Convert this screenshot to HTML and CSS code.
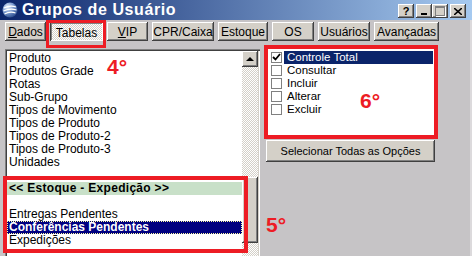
FILE: index.html
```html
<!DOCTYPE html>
<html lang="pt-BR">
<head>
    <meta charset="UTF-8">
    <title>Grupos de Usuário</title>
    <link rel="stylesheet" href="styles.css">
</head>
<body>
<div class="window">
    <div class="titlebar">
        <svg class="app-icon" width="16" height="16" viewBox="0 0 16 16">
            <defs>
                <radialGradient id="globe" cx="35%" cy="30%" r="75%">
                    <stop offset="0" stop-color="#e8f0ff"/>
                    <stop offset="0.5" stop-color="#7a9ad0"/>
                    <stop offset="1" stop-color="#2a4a8a"/>
                </radialGradient>
            </defs>
            <circle cx="8" cy="8" r="7.5" fill="url(#globe)"/>
            <path d="M2 6 Q8 3 14 5" stroke="#fff" stroke-width="1.3" fill="none"/>
            <path d="M1.5 9 Q8 6 14.5 8" stroke="#fff" stroke-width="1.3" fill="none"/>
            <path d="M2.5 12 Q8 9 13.5 11" stroke="#fff" stroke-width="1.3" fill="none"/>
        </svg>
        <span class="title">Grupos de Usuário</span>
        <div class="title-buttons">
            <span class="tbtn help">?</span>
            <span class="tbtn"><span class="glyph-min"></span></span>
            <span class="tbtn"><span class="glyph-max"></span></span>
            <span class="tbtn close">
                <svg width="8" height="7" viewBox="0 0 8 7"><path d="M0 0L8 7M8 0L0 7" stroke="#000" stroke-width="1.6"/></svg>
            </span>
        </div>
    </div>

    <div class="toolbar">
        <button class="btn b-dados"><u>D</u>ados</button>
        <button class="btn b-tabelas pressed">Tabelas</button>
        <button class="btn b-vip"><u>V</u>IP</button>
        <button class="btn b-cpr">CPR/Caixa</button>
        <button class="btn b-estoque">Estoque</button>
        <button class="btn b-os">OS</button>
        <button class="btn b-usuarios">Usuários</button>
        <button class="btn b-avancadas">Avançadas</button>
    </div>

    <div class="main">
        <div class="listbox">
            <div class="items">
                <div class="item">Produto</div>
                <div class="item">Produtos Grade</div>
                <div class="item">Rotas</div>
                <div class="item">Sub-Grupo</div>
                <div class="item">Tipos de Movimento</div>
                <div class="item">Tipos de Produto</div>
                <div class="item">Tipos de Produto-2</div>
                <div class="item">Tipos de Produto-3</div>
                <div class="item">Unidades</div>
                <div class="item"></div>
                <div class="item group">&lt;&lt; Estoque - Expedição &gt;&gt;</div>
                <div class="item"></div>
                <div class="item">Entregas Pendentes</div>
                <div class="item selected">Conferências Pendentes</div>
                <div class="item">Expedições</div>
            </div>
            <div class="scrollbar">
                <div class="arrow-up"><span class="tri"></span></div>
                <div class="track"><div class="thumb"></div></div>
            </div>
        </div>

        <div class="side">
            <div class="checklist">
                <div class="check-row active"><span class="box checked"><svg width="9" height="9" viewBox="0 0 9 9"><path d="M1 4L3.5 6.5L8 1" stroke="#000" stroke-width="1.8" fill="none"/></svg></span><span class="label">Controle Total</span></div>
                <div class="check-row"><span class="box"></span><span class="label">Consultar</span></div>
                <div class="check-row"><span class="box"></span><span class="label">Incluir</span></div>
                <div class="check-row"><span class="box"></span><span class="label">Alterar</span></div>
                <div class="check-row"><span class="box"></span><span class="label">Excluir</span></div>
            </div>
            <button class="btn wide">Selecionar Todas as Opções</button>
        </div>
    </div>

    <!-- marcações em vermelho -->
    <div class="mark mark-tabelas"></div>
    <div class="mark mark-list"></div>
    <div class="mark mark-check"></div>
    <span class="step step-4">4°</span>
    <span class="step step-5">5°</span>
    <span class="step step-6">6°</span>
</div>
</body>
</html>
```

FILE: styles.css
```css
body {
    margin: 0;
    padding: 0;
    background-color: #c6c4c6;
    font-family: "Liberation Sans", Arial, sans-serif;
    font-size: 12px;
}

.window {
    position: relative;
    width: 472px;
    height: 256px;
    overflow: hidden;
    background-color: #c6c4c6;
    box-shadow: inset -2px 0 #dcdadc;
}

/* barra de titulo */
.titlebar {
    height: 20px;
    display: flex;
    align-items: center;
    background: linear-gradient(to right, #0a246a, #a6caf0);
    padding-left: 2px;
}

.app-icon {
    margin-right: 4px;
}

.title {
    color: white;
    font-weight: bold;
    font-size: 16px;
    letter-spacing: 0.6px;
}

.title-buttons {
    margin-left: auto;
    display: flex;
    align-items: center;
    padding-right: 6px;
    padding-top: 2px;
}

.tbtn {
    width: 16px;
    height: 14px;
    display: flex;
    align-items: center;
    justify-content: center;
    background-color: #d4d0c8;
    box-shadow: inset -1px -1px #404040, inset 1px 1px #fff, inset -2px -2px #808080;
    font-weight: bold;
    font-size: 11px;
    box-sizing: border-box;
}

.tbtn.help {
    margin-right: 2px;
}

.tbtn.close {
    margin-left: 2px;
}

.glyph-min {
    width: 6px;
    height: 2px;
    background: #000;
    margin-top: 6px;
}

.glyph-max {
    width: 8px;
    height: 7px;
    border: 1px solid #808080;
    border-top-width: 2px;
    box-shadow: 1px 1px #fff;
}

/* botoes */
.toolbar {
    display: flex;
    gap: 4px;
    padding: 2px 0 0 5px;
}

.btn {
    height: 19px;
    padding: 0;
    border: none;
    background-color: #d4d0c8;
    box-shadow: inset -1px -1px #404040, inset 1px 1px #fff, inset -2px -2px #808080;
    font-family: "Liberation Sans", Arial, sans-serif;
    font-size: 12px;
    color: #000;
}

.btn.pressed {
    background: repeating-conic-gradient(#fff 0 25%, #d4d0c8 0 50%) 0 0 / 2px 2px;
    box-shadow: inset 1px 1px #404040, inset -1px -1px #fff, inset 2px 2px #808080;
    padding-top: 2px;
}

.b-dados { width: 41px; }
.b-tabelas { width: 53px; }
.b-vip { width: 41px; }
.b-cpr { width: 62px; }
.b-estoque { width: 50px; }
.b-os { width: 42px; }
.b-usuarios { width: 52px; }
.b-avancadas { width: 65px; }

/* area principal */
.main {
    display: flex;
    align-items: flex-start;
    margin-top: 6px;
    padding-left: 5px;
}

.listbox {
    margin-top: 2px;
    width: 255px;
    height: 215px;
    box-sizing: border-box;
    display: flex;
    background: white;
    box-shadow: inset 1px 1px #808080, inset 2px 2px #404040, inset -1px -1px #fff, inset -2px -2px #d4d0c8;
    padding: 2px;
}

.items {
    flex: 1;
    padding-top: 1px;
}

.item {
    height: 13px;
    line-height: 13px;
    padding-left: 2px;
    white-space: nowrap;
}

.item.group {
    background-color: #c8e0c8;
    font-weight: bold;
    letter-spacing: 0.3px;
}

.item.selected {
    background-color: #000080;
    color: white;
    font-weight: bold;
    outline: 1px dotted #ffffa0;
    outline-offset: -1px;
}

.scrollbar {
    width: 16px;
    display: flex;
    flex-direction: column;
}

.arrow-up {
    height: 16px;
    background-color: #d4d0c8;
    box-shadow: inset -1px -1px #404040, inset 1px 1px #fff, inset -2px -2px #808080;
    display: flex;
    align-items: center;
    justify-content: center;
}

.tri {
    width: 0;
    height: 0;
    border-left: 4px solid transparent;
    border-right: 4px solid transparent;
    border-bottom: 4px solid #000;
    margin-top: -1px;
}

.track {
    flex: 1;
    background: repeating-conic-gradient(#fff 0 25%, #d4d0c8 0 50%) 0 0 / 2px 2px;
}

.thumb {
    margin-top: 110px;
    height: 66px;
    background-color: #d4d0c8;
    box-shadow: inset -1px -1px #404040, inset 1px 1px #fff, inset -2px -2px #808080;
}

/* painel da direita */
.side {
    margin-left: 6px;
    width: 169px;
    display: flex;
    flex-direction: column;
    gap: 3px;
}

.checklist {
    height: 90px;
    box-sizing: border-box;
    background: white;
    box-shadow: inset 1px 1px #808080, inset 2px 2px #404040, inset -1px -1px #fff;
    padding: 4px 2px 2px 5px;
    font-size: 11.5px;
}

.check-row {
    height: 13px;
    display: flex;
    align-items: center;
}

.box {
    width: 11px;
    height: 11px;
    box-sizing: border-box;
    border: 1px solid #808080;
    background: white;
    display: flex;
    align-items: center;
    justify-content: center;
}

.label {
    flex: 1;
    height: 13px;
    line-height: 13px;
    margin-left: 2px;
    padding-left: 3px;
}

.check-row.active .label {
    background-color: #0a246a;
    color: white;
}

.btn.wide {
    width: 169px;
    height: 22px;
    font-size: 11px;
}

/* marcacoes */
.mark {
    position: absolute;
    border: 4px solid #ed1c24;
    box-sizing: border-box;
}

.mark-tabelas {
    left: 46px;
    top: 20px;
    width: 60px;
    height: 28px;
    border-width: 3px;
}

.mark-list {
    left: 3px;
    top: 176px;
    width: 245px;
    height: 77px;
}

.mark-check {
    left: 264px;
    top: 45px;
    width: 174px;
    height: 94px;
}

.step {
    position: absolute;
    color: #ed1c24;
    font-weight: bold;
    font-size: 21px;
    line-height: 21px;
}

.step-4 { left: 107px; top: 56px; }
.step-5 { left: 266px; top: 214px; }
.step-6 { left: 360px; top: 90px; }
```
